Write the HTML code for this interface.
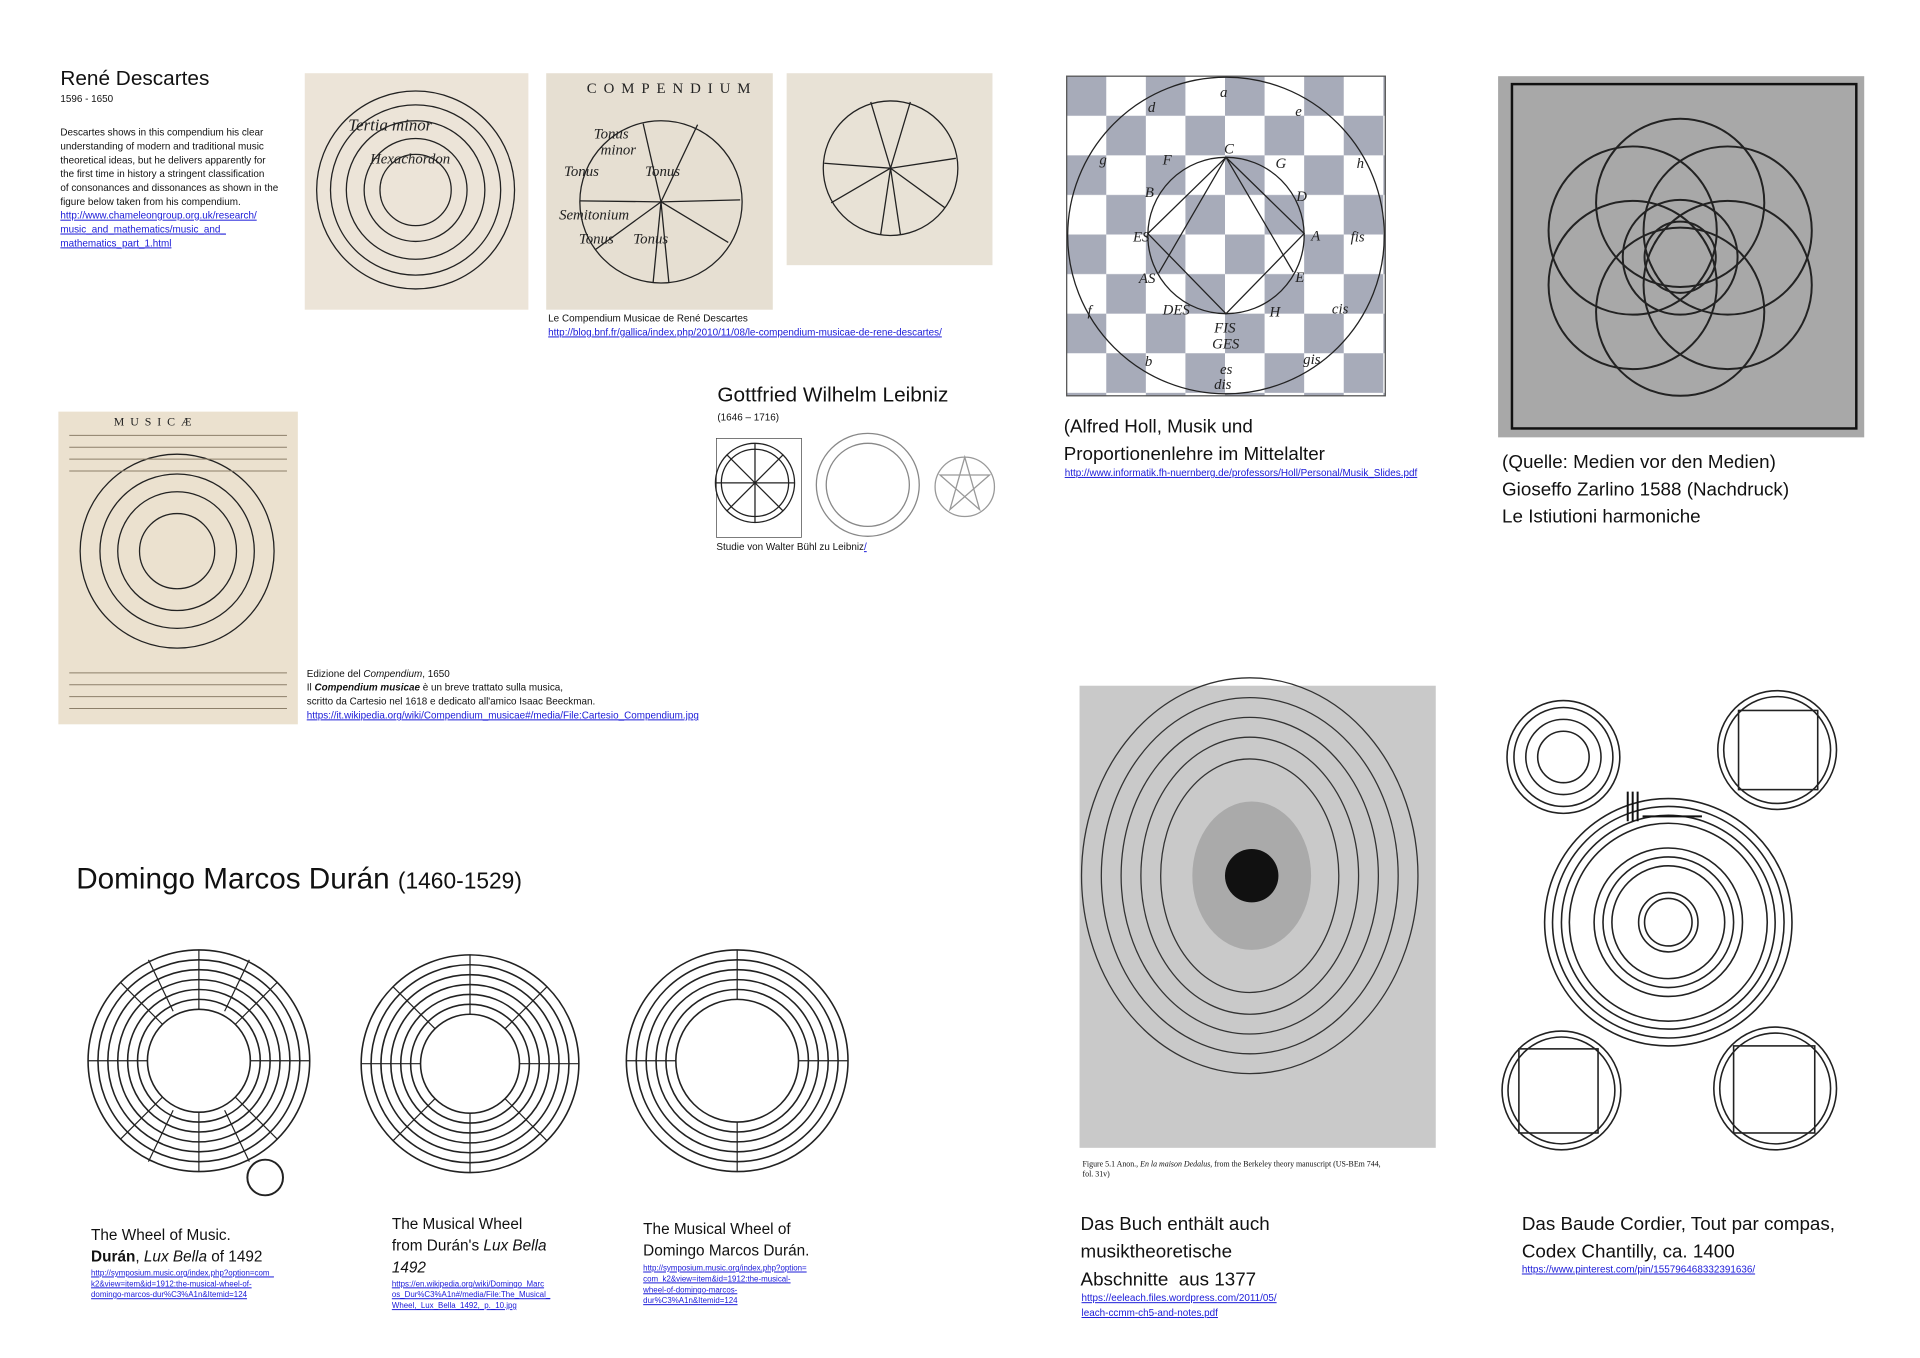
<!DOCTYPE html>
<html><head><meta charset="utf-8"><style>
html,body{margin:0;padding:0;background:#fff;}
body{width:1920px;height:1357px;position:relative;overflow:hidden;font-family:"Liberation Sans",sans-serif;color:#111;}
#w{position:absolute;left:0;top:0;width:1940px;height:1372px;transform:scale(0.9895);transform-origin:0 0;}
.t{position:absolute;white-space:nowrap;}
a,.l{color:#1a1ad8;text-decoration:underline;}
.s{font-size:10px;line-height:14px;}
svg{position:absolute;left:0;top:0;}
</style></head><body><div id="w">
<svg width="1940" height="1372" viewBox="0 0 1940 1372">
<defs>
<pattern id="chk" x="1078" y="77" width="80" height="80" patternUnits="userSpaceOnUse">
<rect width="80" height="80" fill="#fff"/><rect width="40" height="40" fill="#a7abb9"/><rect x="40" y="40" width="40" height="40" fill="#a7abb9"/>
</pattern>
</defs>
<g fill="none" stroke="#222" stroke-width="1.3">
<rect x="308" y="74" width="226" height="239" fill="#ece4d8" stroke="none"/>
<circle cx="420" cy="192" r="100"/><circle cx="420" cy="192" r="86"/><circle cx="420" cy="192" r="70"/><circle cx="420" cy="192" r="52"/><circle cx="420" cy="192" r="36"/>
<rect x="552" y="74" width="229" height="239" fill="#e6dfd2" stroke="none"/>
<circle cx="668" cy="204" r="82"/><path d="M668 204L650 125M668 204L705 126M668 204L586 203M668 204L748 202M668 204L602 252M668 204L736 245M668 204L660 286M668 204L676 286"/>
<rect x="795" y="74" width="208" height="194" fill="#e8e2d6" stroke="none"/>
<circle cx="900" cy="170" r="68"/><path d="M900 170L880 103M900 170L920 103M900 170L833 165M900 170L966 160M900 170L840 205M900 170L955 210M900 170L890 237M900 170L910 237"/>
<rect x="59" y="416" width="242" height="316" fill="#ebe1cf" stroke="none"/>
<circle cx="179" cy="557" r="98"/><circle cx="179" cy="557" r="78"/><circle cx="179" cy="557" r="60"/><circle cx="179" cy="557" r="38"/>
<g stroke="#8c7f6a" stroke-width="1"><path d="M70 440H290M70 452H290M70 464H290M70 476H290M70 680H290M70 692H290M70 704H290M70 716H290"/></g>
<circle cx="763" cy="488" r="40"/><circle cx="763" cy="488" r="34"/><path d="M723 488H803M763 448V528M735 460L791 516M791 460L735 516"/>
<rect x="724" y="443" width="86" height="100" stroke-width="0.6"/>
<circle cx="877" cy="490" r="52" stroke="#888"/><circle cx="877" cy="490" r="42" stroke="#888"/>
<circle cx="975" cy="492" r="30" stroke="#999"/><path d="M950 480L1000 480L960 515L975 462L990 515Z" stroke="#999"/>
<rect x="1078" y="77" width="322" height="323" fill="url(#chk)" stroke="#555"/>
<circle cx="1239" cy="238" r="160" stroke="#222"/><circle cx="1239" cy="238" r="79"/>
<path d="M1239 159L1160 236L1239 317L1318 236ZM1239 159L1171 276M1239 159L1307 275"/>
<rect x="1514" y="77" width="370" height="365" fill="#a8a8a8" stroke="none"/>
<rect x="1528" y="85" width="348" height="348" stroke="#111" stroke-width="2.5"/>
<g stroke-width="2">
<circle cx="1698" cy="205" r="85"/><circle cx="1698" cy="315" r="85"/><circle cx="1650" cy="233" r="85"/><circle cx="1746" cy="233" r="85"/><circle cx="1650" cy="288" r="85"/><circle cx="1746" cy="288" r="85"/>
<circle cx="1698" cy="260" r="58"/><circle cx="1698" cy="260" r="36"/></g>
<g stroke-width="1.6">
<circle cx="201" cy="1072" r="112"/><circle cx="201" cy="1072" r="102"/><circle cx="201" cy="1072" r="92"/><circle cx="201" cy="1072" r="82"/><circle cx="201" cy="1072" r="72"/><circle cx="201" cy="1072" r="62"/><circle cx="201" cy="1072" r="52"/>
<circle cx="475" cy="1075" r="110"/><circle cx="475" cy="1075" r="100"/><circle cx="475" cy="1075" r="90"/><circle cx="475" cy="1075" r="80"/><circle cx="475" cy="1075" r="70"/><circle cx="475" cy="1075" r="60"/><circle cx="475" cy="1075" r="50"/>
<circle cx="745" cy="1072" r="112"/><circle cx="745" cy="1072" r="102"/><circle cx="745" cy="1072" r="92"/><circle cx="745" cy="1072" r="82"/><circle cx="745" cy="1072" r="72"/><circle cx="745" cy="1072" r="62"/>
</g>
<g stroke-width="1.2">
<path d="M201 960V1020M201 1124V1184M89 1072H149M253 1072H313M122 993L164 1035M238 1109L280 1151M280 993L238 1035M164 1109L122 1151M150 970L175 1022M252 970L227 1022M150 1174L175 1122M252 1174L227 1122"/>
<path d="M475 965V1025M475 1125V1185M365 1075H425M525 1075H585M397 997L440 1040M510 1110L553 1153M553 997L510 1040M440 1110L397 1153"/>
<path d="M745 960V1010M745 1134V1184M633 1072H683M807 1072H857"/>
</g>
<circle cx="268" cy="1190" r="18" stroke-width="2"/>
<rect x="1091" y="693" width="360" height="467" fill="#c9c9c9" stroke="none"/>
<g stroke="#333" stroke-width="1.3">
<ellipse cx="1263" cy="885" rx="170" ry="200"/><ellipse cx="1263" cy="885" rx="150" ry="180"/><ellipse cx="1263" cy="885" rx="130" ry="160"/><ellipse cx="1263" cy="885" rx="110" ry="140"/><ellipse cx="1263" cy="885" rx="90" ry="118"/>
</g>
<ellipse cx="1265" cy="885" rx="60" ry="75" fill="#aaa" stroke="none"/>
<circle cx="1265" cy="885" r="27" fill="#111" stroke="none"/>
<g stroke-width="1.6">
<circle cx="1580" cy="765" r="57"/><circle cx="1580" cy="765" r="50"/><circle cx="1580" cy="765" r="38"/><circle cx="1580" cy="765" r="26"/>
<circle cx="1796" cy="758" r="60"/><circle cx="1796" cy="758" r="54"/><rect x="1757" y="718" width="80" height="80"/>
<circle cx="1686" cy="932" r="125"/><circle cx="1686" cy="932" r="117"/><circle cx="1686" cy="932" r="108"/><circle cx="1686" cy="932" r="100"/>
<circle cx="1686" cy="932" r="75"/><circle cx="1686" cy="932" r="66"/><circle cx="1686" cy="932" r="57"/><circle cx="1686" cy="932" r="30"/><circle cx="1686" cy="932" r="24"/>
<circle cx="1578" cy="1102" r="60"/><circle cx="1578" cy="1102" r="54"/><rect x="1535" y="1060" width="80" height="85"/>
<circle cx="1794" cy="1100" r="62"/><circle cx="1794" cy="1100" r="56"/><rect x="1752" y="1057" width="82" height="88"/>
</g>
<path d="M1645 800V830M1650 800V830M1655 800V830M1660 825H1720" stroke="#111" stroke-width="2"/>
</g>
<g font-family="Liberation Serif,serif" font-style="italic" font-size="15" fill="#222">
<g transform="translate(13,0)"><text x="1220" y="98">a</text><text x="1147" y="113">d</text><text x="1296" y="117">e</text><text x="1224" y="155">C</text><text x="1162" y="166">F</text><text x="1276" y="170">G</text><text x="1144" y="199">B</text><text x="1297" y="203">D</text><text x="1132" y="244">ES</text><text x="1312" y="243">A</text><text x="1352" y="244">fis</text><text x="1138" y="286">AS</text><text x="1296" y="285">E</text><text x="1162" y="318">DES</text><text x="1270" y="320">H</text><text x="1214" y="336">FIS</text><text x="1212" y="352">GES</text><text x="1333" y="317">cis</text><text x="1098" y="166">g</text><text x="1358" y="170">h</text><text x="1086" y="319">f</text><text x="1144" y="370">b</text><text x="1304" y="368">gis</text><text x="1220" y="378">es</text><text x="1214" y="393">dis</text></g>
<text x="600" y="140">Tonus</text><text x="607" y="156">minor</text><text x="570" y="178">Tonus</text><text x="652" y="178">Tonus</text><text x="565" y="222">Semitonium</text><text x="585" y="246">Tonus</text><text x="640" y="246">Tonus</text>
<text x="352" y="132" font-size="17">Tertia minor</text><text x="374" y="165" font-size="15">Hexachordon</text>
</g>
<text x="593" y="94" font-family="Liberation Serif,serif" font-size="15" letter-spacing="7" fill="#222">COMPENDIUM</text>
<text x="115" y="430" font-family="Liberation Serif,serif" font-size="12" letter-spacing="6" fill="#222">MUSICÆ</text>
</svg>

<div class="t" style="left:61px;top:68px;font-size:21px;">René Descartes</div>
<div class="t" style="left:61px;top:95px;font-size:10px;">1596 - 1650</div>
<div class="t s" style="left:61px;top:128px;">Descartes shows in this compendium his clear<br>understanding of modern and traditional music<br>theoretical ideas, but he delivers apparently for<br>the first time in history a stringent classification<br>of consonances and dissonances as shown in the<br>figure below taken from his compendium.<br><span class="l">http://www.chameleongroup.org.uk/research/</span><br><span class="l">music_and_mathematics/music_and_</span><br><span class="l">mathematics_part_1.html</span></div>

<div class="t s" style="left:554px;top:316px;">Le Compendium Musicae de René Descartes<br><span class="l">http://blog.bnf.fr/gallica/index.php/2010/11/08/le-compendium-musicae-de-rene-descartes/</span></div>

<div class="t" style="left:1075px;top:418px;font-size:19px;line-height:28px;">(Alfred Holl, Musik und<br>Proportionenlehre im Mittelalter</div>
<div class="t s" style="left:1076px;top:472px;"><span class="l">http://www.informatik.fh-nuernberg.de/professors/Holl/Personal/Musik_Slides.pdf</span></div>

<div class="t" style="left:1518px;top:454px;font-size:19px;line-height:27.5px;">(Quelle: Medien vor den Medien)<br>Gioseffo Zarlino 1588 (Nachdruck)<br>Le Istiutioni harmoniche</div>

<div class="t" style="left:725px;top:388px;font-size:21px;">Gottfried Wilhelm Leibniz</div>
<div class="t" style="left:725px;top:417px;font-size:10px;">(1646 – 1716)</div>
<div class="t s" style="left:724px;top:547px;">Studie von Walter Bühl zu Leibniz<span class="l">/</span></div>

<div class="t s" style="left:310px;top:675px;">Edizione del <i>Compendium</i>, 1650<br>Il <b><i>Compendium musicae</i></b> è un breve trattato sulla musica,<br>scritto da Cartesio nel 1618 e dedicato all'amico Isaac Beeckman.<br><span class="l">https://it.wikipedia.org/wiki/Compendium_musicae#/media/File:Cartesio_Compendium.jpg</span></div>

<div class="t" style="left:77px;top:872px;font-size:30px;">Domingo Marcos Durán <span style="font-size:23px">(1460-1529)</span></div>

<div class="t" style="left:92px;top:1238px;font-size:15.5px;line-height:22px;">The Wheel of Music.<br><b>Durán</b>, <i>Lux Bella</i> of 1492</div>
<div class="t" style="left:92px;top:1281px;font-size:8px;line-height:11px;"><span class="l">http://symposium.music.org/index.php?option=com_</span><br><span class="l">k2&amp;view=item&amp;id=1912:the-musical-wheel-of-</span><br><span class="l">domingo-marcos-dur%C3%A1n&amp;Itemid=124</span></div>

<div class="t" style="left:396px;top:1227px;font-size:15.5px;line-height:22px;">The Musical Wheel<br>from Durán's <i>Lux Bella</i><br><i>1492</i></div>
<div class="t" style="left:396px;top:1292px;font-size:8px;line-height:11px;"><span class="l">https://en.wikipedia.org/wiki/Domingo_Marc</span><br><span class="l">os_Dur%C3%A1n#/media/File:The_Musical_</span><br><span class="l">Wheel,_Lux_Bella_1492,_p._10.jpg</span></div>

<div class="t" style="left:650px;top:1232px;font-size:15.5px;line-height:22px;">The Musical Wheel of<br>Domingo Marcos Durán.</div>
<div class="t" style="left:650px;top:1276px;font-size:8px;line-height:11px;"><span class="l">http://symposium.music.org/index.php?option=</span><br><span class="l">com_k2&amp;view=item&amp;id=1912:the-musical-</span><br><span class="l">wheel-of-domingo-marcos-</span><br><span class="l">dur%C3%A1n&amp;Itemid=124</span></div>

<div class="t" style="left:1094px;top:1172px;font-size:8px;line-height:10px;font-family:'Liberation Serif',serif;">Figure 5.1 Anon., <i>En la maison Dedalus</i>, from the Berkeley theory manuscript (US-BEm 744,<br>fol. 31v)</div>
<div class="t" style="left:1092px;top:1224px;font-size:19px;line-height:28px;">Das Buch enthält auch<br>musiktheoretische<br>Abschnitte&nbsp; aus 1377</div>
<div class="t" style="left:1093px;top:1305px;font-size:10px;line-height:15px;"><span class="l">https://eeleach.files.wordpress.com/2011/05/</span><br><span class="l">leach-ccmm-ch5-and-notes.pdf</span></div>

<div class="t" style="left:1538px;top:1224px;font-size:19px;line-height:28px;">Das Baude Cordier, Tout par compas,<br>Codex Chantilly, ca. 1400</div>
<div class="t" style="left:1538px;top:1278px;font-size:10px;"><span class="l">https://www.pinterest.com/pin/155796468332391636/</span></div>
</div></body></html>
